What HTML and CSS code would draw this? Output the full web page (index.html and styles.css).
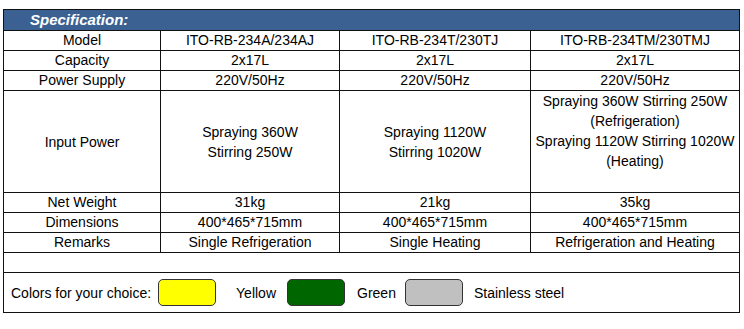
FILE: index.html
```html
<!DOCTYPE html>
<html>
<head>
<meta charset="utf-8">
<link rel="stylesheet" href="styles.css">
</head>
<body>
<div class="spec">
  <div class="head">Specification:</div>

  <div class="c">Model</div>
  <div class="c">ITO-RB-234A/234AJ</div>
  <div class="c">ITO-RB-234T/230TJ</div>
  <div class="c">ITO-RB-234TM/230TMJ</div>

  <div class="c">Capacity</div>
  <div class="c">2x17L</div>
  <div class="c">2x17L</div>
  <div class="c">2x17L</div>

  <div class="c">Power Supply</div>
  <div class="c">220V/50Hz</div>
  <div class="c">220V/50Hz</div>
  <div class="c">220V/50Hz</div>

  <div class="c tall">Input Power</div>
  <div class="c tall">Spraying 360W<br>Stirring 250W</div>
  <div class="c tall">Spraying 1120W<br>Stirring 1020W</div>
  <div class="c tall top">Spraying 360W Stirring 250W<br>(Refrigeration)<br>Spraying 1120W Stirring 1020W<br>(Heating)</div>

  <div class="c">Net Weight</div>
  <div class="c">31kg</div>
  <div class="c">21kg</div>
  <div class="c">35kg</div>

  <div class="c">Dimensions</div>
  <div class="c">400*465*715mm</div>
  <div class="c">400*465*715mm</div>
  <div class="c">400*465*715mm</div>

  <div class="c">Remarks</div>
  <div class="c">Single Refrigeration</div>
  <div class="c">Single Heating</div>
  <div class="c">Refrigeration and Heating</div>

  <div class="full empty"></div>

  <div class="full colors">
    <span class="lbl">Colors for your choice:</span>
    <span class="sw yellow"></span>
    <span class="name n-yellow">Yellow</span>
    <span class="sw green"></span>
    <span class="name n-green">Green</span>
    <span class="sw gray"></span>
    <span class="name n-gray">Stainless steel</span>
  </div>
</div>
</body>
</html>
```

FILE: styles.css
```css
html, body {
  margin: 0;
  padding: 0;
  background: #ffffff;
}
body {
  padding: 9px 0 0 3px;
  font-family: "Liberation Sans", Arial, sans-serif;
  font-size: 14px;
  color: #000;
}
.spec {
  width: 737px;
  box-sizing: border-box;
  display: grid;
  grid-template-columns: 156px 178px 190px 208px;
  grid-template-rows: 20px 19px 19px 19px 101px 19px 19px 19px 19px 39px;
  gap: 1px;
  padding: 1px;
  background: #111;
}
.head {
  grid-column: 1 / -1;
  background: #3a6191;
  color: #fff;
  font-weight: bold;
  font-style: italic;
  font-size: 15px;
  line-height: 20px;
  padding-left: 26px;
}
.c {
  background: #fff;
  display: flex;
  align-items: center;
  justify-content: center;
  text-align: center;
  line-height: 19px;
  white-space: nowrap;
}
.tall {
  line-height: 20px;
}
.top {
  align-items: flex-start;
}
.full {
  grid-column: 1 / -1;
  background: #fff;
}
.colors {
  display: flex;
  align-items: center;
  padding-left: 7px;
}
.sw {
  display: inline-block;
  width: 58px;
  height: 27px;
  box-sizing: border-box;
  border: 1px solid #333;
  border-radius: 5px;
}
.yellow { background: #ffff00; margin-left: 7px; }
.green { background: #006600; margin-left: 11px; }
.gray { background: #c0c0c0; margin-left: 9px; }
.n-yellow { margin-left: 20px; }
.n-green { margin-left: 12px; }
.n-gray { margin-left: 11px; }
```
